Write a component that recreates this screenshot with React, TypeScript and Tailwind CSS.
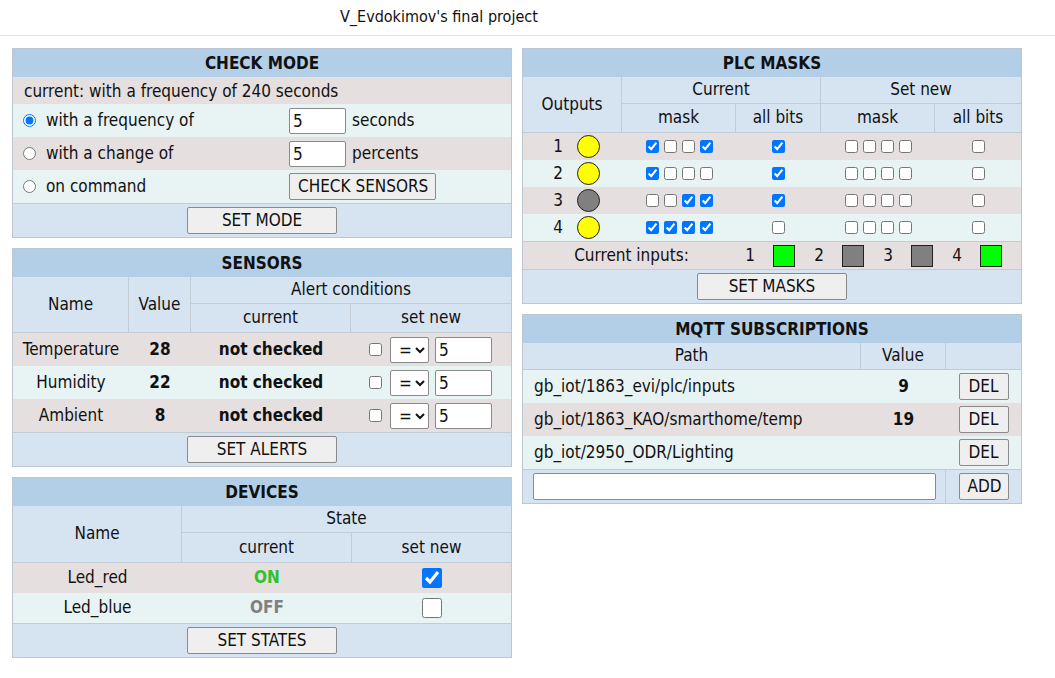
import React from "react";

const pink = "bg-[#e6dfdf]";
const cyan = "bg-[#e8f3f4]";

function Panel({ title, children }: { title: string; children: React.ReactNode }) {
  return (
    <div className="border border-[#bcc7d2] bg-[#d6e4f2]">
      <div className="h-[28px] bg-[#b3cfe8] text-center font-bold leading-[29px]">{title}</div>
      {children}
    </div>
  );
}

function Btn({ children, className = "" }: { children: React.ReactNode; className?: string }) {
  return (
    <button
      className={
        "h-[27px] whitespace-nowrap rounded-[2px] border border-[#8a8a8a] bg-[#efefef] px-2 leading-[25px] text-[#111] " +
        className
      }
    >
      {children}
    </button>
  );
}

function ButtonRow({ label }: { label: string }) {
  return (
    <div className="flex h-[34px] items-center justify-center border-t border-[#c3ccd5]">
      <Btn className="w-[150px]">{label}</Btn>
    </div>
  );
}

function Num({ value, className = "" }: { value: string; className?: string }) {
  return (
    <input
      defaultValue={value}
      className={"h-[26px] w-[57px] rounded-[2px] border border-[#8a8a8a] bg-white px-[3px] outline-none " + className}
    />
  );
}

function CheckMode() {
  return (
    <Panel title="CHECK MODE">
      <div className={`h-[27px] ${pink} pl-[11px] leading-[28px]`}>current: with a frequency of 240 seconds</div>
      <div className={`flex h-[33px] items-center ${cyan}`}>
        <label className="flex w-[276px] items-center gap-[10px] pl-[10px]">
          <input type="radio" name="mode" defaultChecked className="m-0 h-[13px] w-[13px]" />
          with a frequency of
        </label>
        <Num value="5" />
        <span className="ml-[6px]">seconds</span>
      </div>
      <div className={`flex h-[33px] items-center ${pink}`}>
        <label className="flex w-[276px] items-center gap-[10px] pl-[10px]">
          <input type="radio" name="mode" className="m-0 h-[13px] w-[13px]" />
          with a change of
        </label>
        <Num value="5" />
        <span className="ml-[6px]">percents</span>
      </div>
      <div className={`flex h-[33px] items-center ${cyan}`}>
        <label className="flex w-[276px] items-center gap-[10px] pl-[10px]">
          <input type="radio" name="mode" className="m-0 h-[13px] w-[13px]" />
          on command
        </label>
        <Btn className="w-[147px] px-0">CHECK SENSORS</Btn>
      </div>
      <ButtonRow label="SET MODE" />
    </Panel>
  );
}

const sensors = [
  { name: "Temperature", value: "28", bg: pink },
  { name: "Humidity", value: "22", bg: cyan },
  { name: "Ambient", value: "8", bg: pink },
];

function Sensors() {
  return (
    <Panel title="SENSORS">
      <div className="grid grid-cols-[116px_62px_160px_160px] grid-rows-[27px_28px] border-b border-[#c3ccd5]">
        <div className="row-span-2 flex items-center justify-center border-r border-[#c3ccd5]">Name</div>
        <div className="row-span-2 flex items-center justify-center border-r border-[#c3ccd5]">Value</div>
        <div className="col-span-2 flex items-center justify-center border-b border-[#c3ccd5]">Alert conditions</div>
        <div className="flex items-center justify-center border-r border-[#c3ccd5]">current</div>
        <div className="flex items-center justify-center">set new</div>
      </div>
      {sensors.map((s) => (
        <div key={s.name} className={`grid h-[33px] grid-cols-[116px_62px_160px_160px] items-center ${s.bg}`}>
          <div className="text-center">{s.name}</div>
          <div className="text-center font-bold">{s.value}</div>
          <div className="text-center font-bold">not checked</div>
          <div className="flex items-center pl-[18px]">
            <input type="checkbox" className="m-0 h-[13px] w-[13px]" />
            <select className="ml-[8px] h-[26px] w-[39px] rounded-[2px] border border-[#8a8a8a] bg-white pl-[4px]">
              <option>=</option>
            </select>
            <Num value="5" className="ml-[6px]" />
          </div>
        </div>
      ))}
      <ButtonRow label="SET ALERTS" />
    </Panel>
  );
}

function Devices() {
  return (
    <Panel title="DEVICES">
      <div className="grid grid-cols-[169px_170px_159px] grid-rows-[27px_29px] border-b border-[#c3ccd5]">
        <div className="row-span-2 flex items-center justify-center border-r border-[#c3ccd5]">Name</div>
        <div className="col-span-2 flex items-center justify-center border-b border-[#c3ccd5]">State</div>
        <div className="flex items-center justify-center border-r border-[#c3ccd5]">current</div>
        <div className="flex items-center justify-center">set new</div>
      </div>
      <div className={`grid h-[30px] grid-cols-[169px_170px_159px] items-center ${pink}`}>
        <div className="text-center">Led_red</div>
        <div className="text-center font-bold text-[#2fc12f]">ON</div>
        <div className="flex justify-center">
          <input type="checkbox" defaultChecked className="m-0 h-[20px] w-[20px]" />
        </div>
      </div>
      <div className={`grid h-[30px] grid-cols-[169px_170px_159px] items-center ${cyan}`}>
        <div className="text-center">Led_blue</div>
        <div className="text-center font-bold text-[#808080]">OFF</div>
        <div className="flex justify-center">
          <input type="checkbox" className="m-0 h-[20px] w-[20px]" />
        </div>
      </div>
      <ButtonRow label="SET STATES" />
    </Panel>
  );
}

const outputs = [
  { n: "1", on: true, mask: [true, false, false, true], all: true },
  { n: "2", on: true, mask: [true, false, false, false], all: true },
  { n: "3", on: false, mask: [false, false, true, true], all: true },
  { n: "4", on: true, mask: [true, true, true, true], all: false },
];

function Boxes({ bits }: { bits: boolean[] }) {
  return (
    <div className="flex justify-center gap-[5px]">
      {bits.map((b, i) => (
        <input key={i} type="checkbox" defaultChecked={b} className="m-0 h-[13px] w-[13px]" />
      ))}
    </div>
  );
}

const inputs = [true, false, false, true];

function PlcMasks() {
  return (
    <Panel title="PLC MASKS">
      <div className="grid grid-cols-[99px_114px_85px_114px_86px] grid-rows-[27px_28px] border-b border-[#c3ccd5]">
        <div className="row-span-2 flex items-center justify-center border-r border-[#c3ccd5]">Outputs</div>
        <div className="col-span-2 flex items-center justify-center border-r border-b border-[#c3ccd5]">Current</div>
        <div className="col-span-2 flex items-center justify-center border-b border-[#c3ccd5]">Set new</div>
        <div className="flex items-center justify-center border-r border-[#c3ccd5]">mask</div>
        <div className="flex items-center justify-center border-r border-[#c3ccd5]">all bits</div>
        <div className="flex items-center justify-center border-r border-[#c3ccd5]">mask</div>
        <div className="flex items-center justify-center">all bits</div>
      </div>
      {outputs.map((o, i) => (
        <div
          key={o.n}
          className={`grid h-[27px] grid-cols-[99px_114px_85px_114px_86px] items-center ${i % 2 === 0 ? pink : cyan}`}
        >
          <div className="flex items-center pl-[30px]">
            <span className="w-[10px] text-center">{o.n}</span>
            <span
              className={`ml-[14px] h-[23px] w-[23px] rounded-full border border-[#222] ${
                o.on ? "bg-[#ffff00]" : "bg-[#808080]"
              }`}
            />
          </div>
          <Boxes bits={o.mask} />
          <div className="flex justify-center">
            <input type="checkbox" defaultChecked={o.all} className="m-0 h-[13px] w-[13px]" />
          </div>
          <Boxes bits={[false, false, false, false]} />
          <div className="flex justify-center">
            <input type="checkbox" className="m-0 h-[13px] w-[13px]" />
          </div>
        </div>
      ))}
      <div className={`flex h-[28px] items-center border-t border-[#c3ccd5] ${pink}`}>
        <span className="w-[217px] text-center">Current inputs:</span>
        {inputs.map((on, i) => (
          <div key={i} className="flex w-[69px] items-center">
            <span className="w-[20px] text-center">{i + 1}</span>
            <span
              className={`ml-[13px] h-[22px] w-[22px] border border-[#222] ${on ? "bg-[#00ff00]" : "bg-[#808080]"}`}
            />
          </div>
        ))}
      </div>
      <ButtonRow label="SET MASKS" />
    </Panel>
  );
}

const subs = [
  { path: "gb_iot/1863_evi/plc/inputs", value: "9", bg: cyan },
  { path: "gb_iot/1863_KAO/smarthome/temp", value: "19", bg: pink },
  { path: "gb_iot/2950_ODR/Lighting", value: "", bg: cyan },
];

function Mqtt() {
  return (
    <Panel title="MQTT SUBSCRIPTIONS">
      <div className="grid h-[27px] grid-cols-[338px_85px_75px] border-b border-[#c3ccd5]">
        <div className="flex items-center justify-center border-r border-[#c3ccd5]">Path</div>
        <div className="flex items-center justify-center border-r border-[#c3ccd5]">Value</div>
        <div />
      </div>
      {subs.map((s) => (
        <div key={s.path} className={`grid h-[33px] grid-cols-[338px_85px_75px] items-center ${s.bg}`}>
          <div className="pl-[11px]">{s.path}</div>
          <div className="text-center font-bold">{s.value}</div>
          <div className="flex justify-center">
            <Btn className="w-[50px] px-0">DEL</Btn>
          </div>
        </div>
      ))}
      <div className="grid h-[34px] grid-cols-[338px_85px_75px] items-center border-t border-[#c3ccd5]">
        <div className="col-span-2 border-r border-[#c3ccd5] py-[3px] pl-[10px]">
          <input className="h-[27px] w-[403px] rounded-[2px] border border-[#8a8a8a] bg-white outline-none" />
        </div>
        <div className="flex justify-center">
          <Btn className="w-[50px] px-0">ADD</Btn>
        </div>
      </div>
    </Panel>
  );
}

export default function App() {
  return (
    <div className="min-h-[678px] bg-white font-['DejaVu_Sans_Condensed','DejaVu_Sans',sans-serif] text-[17px] text-[#111]">
      <div className="h-[36px] border-b border-[#e2e2e2] pl-[340px] pt-[5px] text-[16px]">V_Evdokimov's final project</div>
      <div className="flex items-start gap-[10px] pl-[12px] pt-[12px]">
        <div className="flex w-[500px] flex-col gap-[10px]">
          <CheckMode />
          <Sensors />
          <Devices />
        </div>
        <div className="flex w-[500px] flex-col gap-[10px]">
          <PlcMasks />
          <Mqtt />
        </div>
      </div>
    </div>
  );
}
